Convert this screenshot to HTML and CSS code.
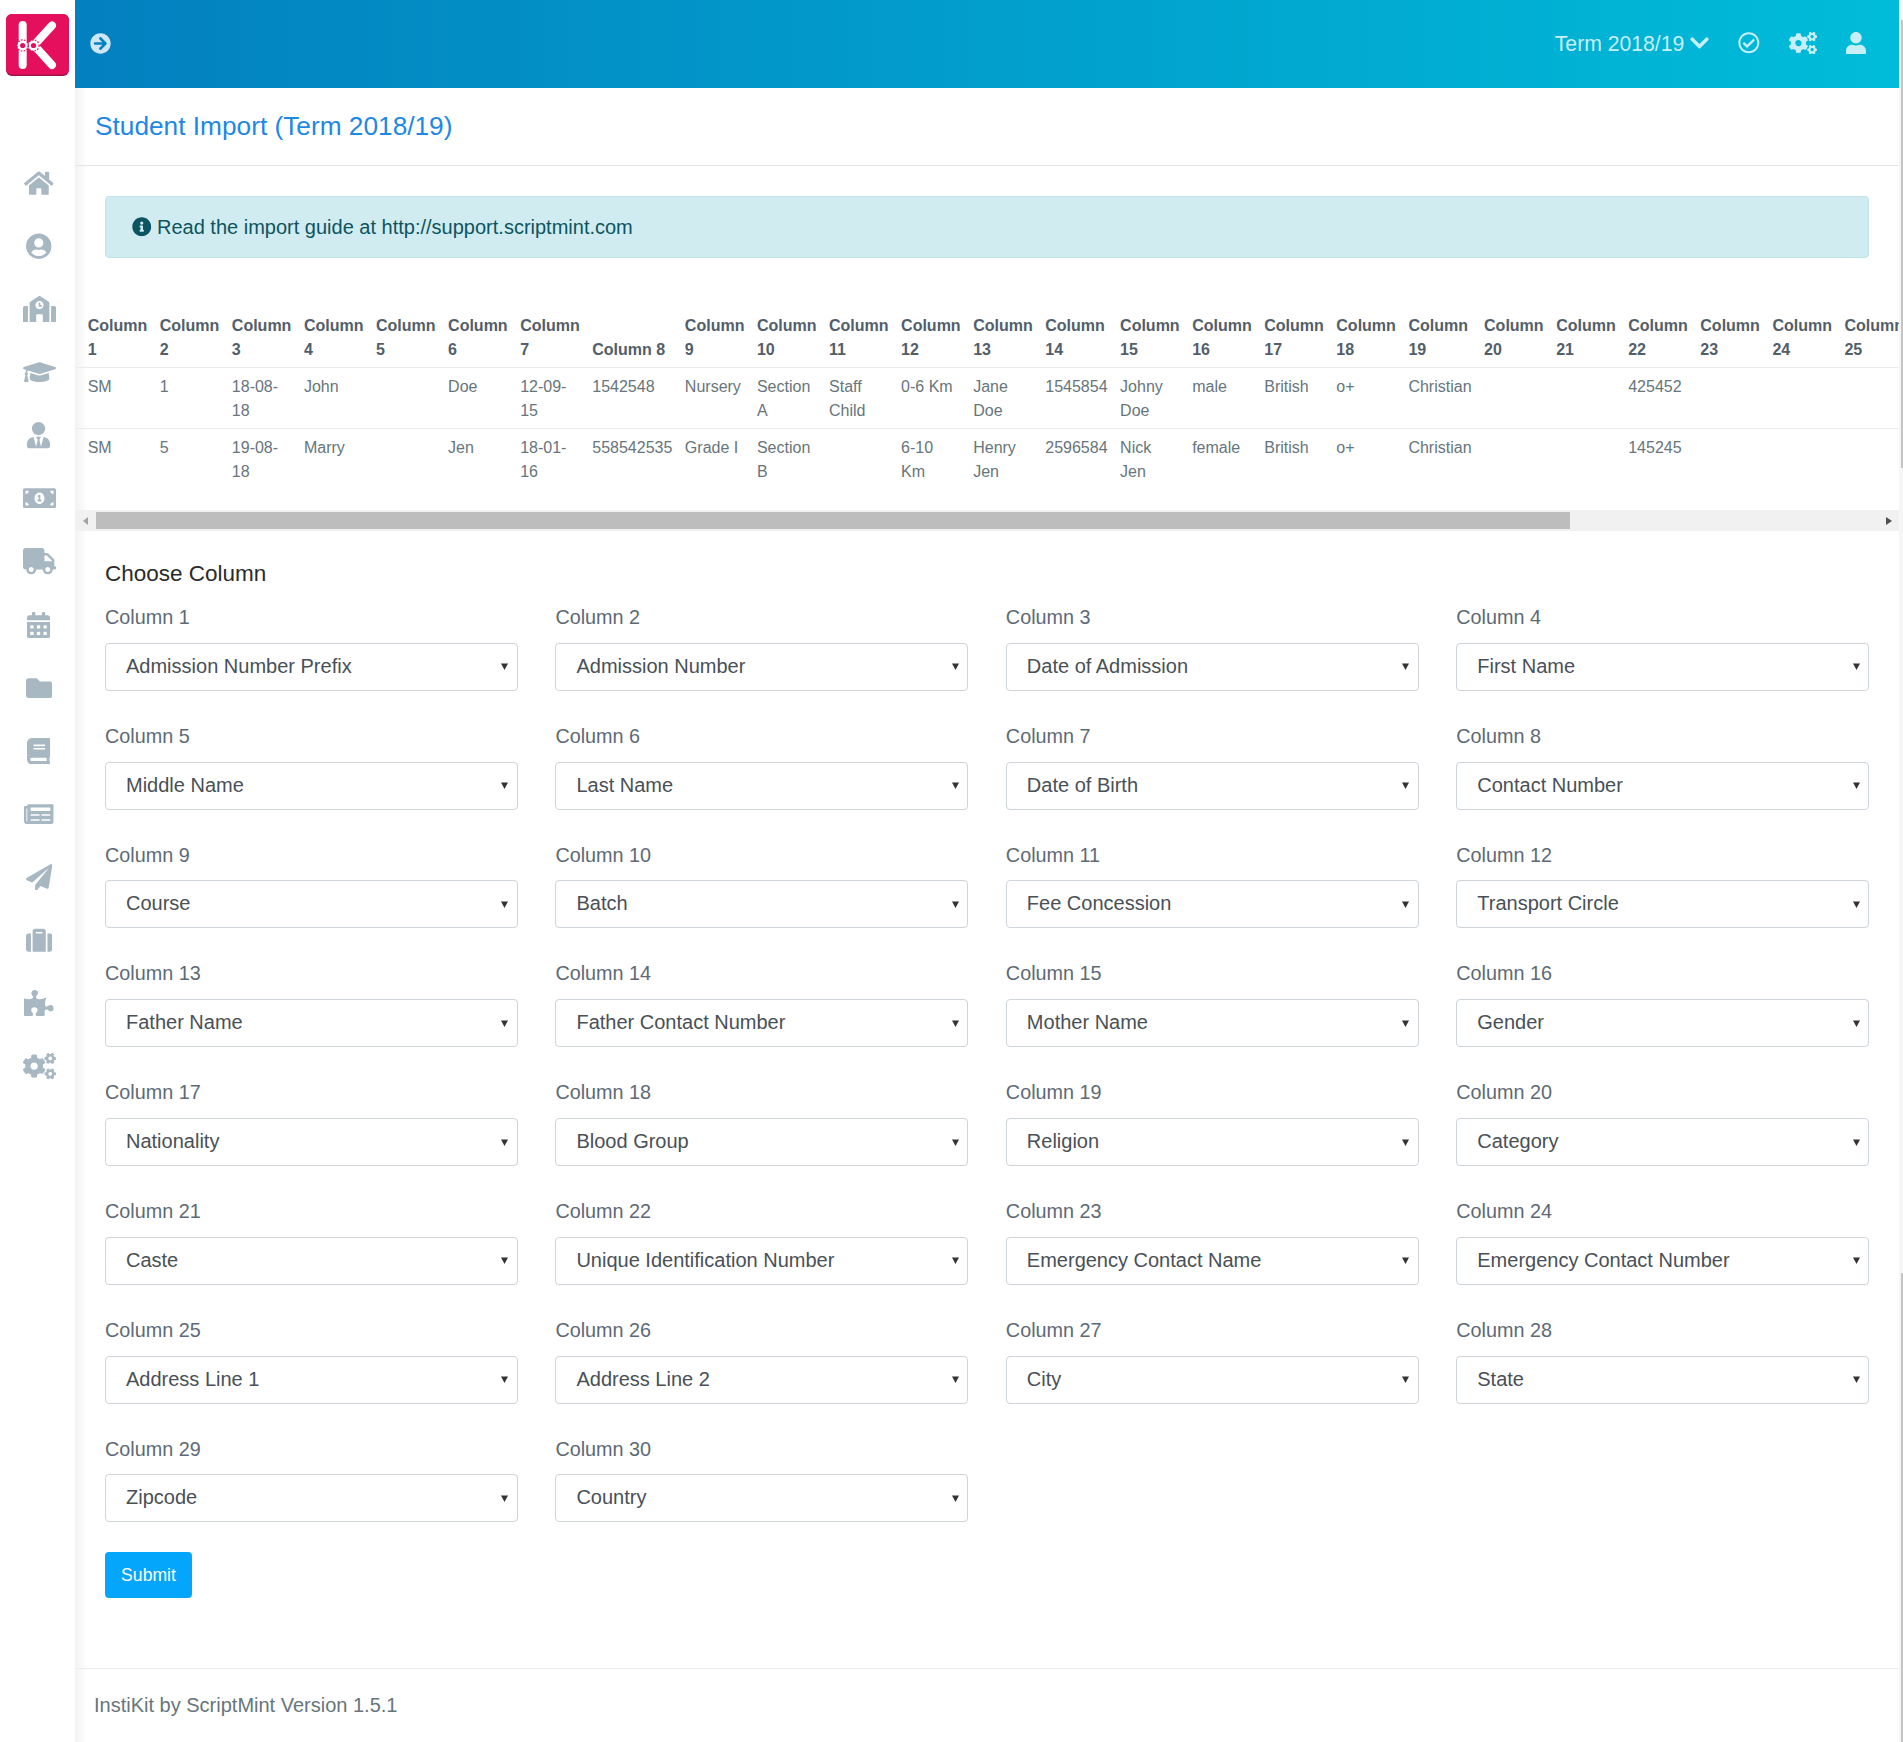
FILE: index.html
```html
<!DOCTYPE html>
<html lang="en">
<head>
<meta charset="utf-8">
<title>Student Import</title>
<link rel="stylesheet" href="styles.css">
</head>
<body>
<svg class="defs" aria-hidden="true">
<symbol id="i-home" viewBox="0 0 576 512"><path d="M280.37 148.26L96 300.11V464a16 16 0 0 0 16 16l112.06-.29a16 16 0 0 0 15.92-16V368a16 16 0 0 1 16-16h64a16 16 0 0 1 16 16v95.64a16 16 0 0 0 16 16.05L464 480a16 16 0 0 0 16-16V300L295.67 148.26a12.19 12.19 0 0 0-15.3 0zM571.6 251.47L488 182.56V44.05a12 12 0 0 0-12-12h-56a12 12 0 0 0-12 12v72.61L318.47 43a48 48 0 0 0-61 0L4.34 251.47a12 12 0 0 0-1.6 16.9l25.5 31A12 12 0 0 0 45.15 301l235.22-193.74a12.19 12.19 0 0 1 15.3 0L530.9 301a12 12 0 0 0 16.9-1.6l25.5-31a12 12 0 0 0-1.7-16.93z"/></symbol>
<symbol id="i-user-circle" viewBox="0 0 496 512"><path d="M248 8C111 8 0 119 0 256s111 248 248 248 248-111 248-248S385 8 248 8zm0 96c48.6 0 88 39.4 88 88s-39.4 88-88 88-88-39.4-88-88 39.4-88 88-88zm0 344c-58.7 0-111.3-26.6-146.5-68.2 18.8-35.4 55.6-59.8 98.5-59.8 2.4 0 4.8.4 7.1 1.1 13 4.2 26.6 6.9 40.9 6.9 14.3 0 28-2.7 40.9-6.9 2.3-.7 4.7-1.1 7.1-1.1 42.9 0 79.7 24.4 98.5 59.8C359.3 421.4 306.7 448 248 448z"/></symbol>
<symbol id="i-school" viewBox="0 0 640 512"><path d="M0 224v272c0 8.84 7.16 16 16 16h80V192H32c-17.67 0-32 14.33-32 32zm360-48h-24v-40c0-4.42-3.58-8-8-8h-16c-4.42 0-8 3.58-8 8v64c0 4.42 3.58 8 8 8h48c4.42 0 8-3.58 8-8v-16c0-4.42-3.58-8-8-8zm137.75-63.96l-160-106.67a32.02 32.02 0 0 0-35.5 0l-160 106.67A32.002 32.002 0 0 0 128 138.66V512h128V368c0-8.84 7.16-16 16-16h96c8.84 0 16 7.16 16 16v144h128V138.67c0-10.7-5.35-20.69-14.25-26.63zM320 256c-44.18 0-80-35.82-80-80s35.82-80 80-80 80 35.82 80 80-35.82 80-80 80zm288-64h-64v320h80c8.84 0 16-7.16 16-16V224c0-17.67-14.33-32-32-32z"/></symbol>
<symbol id="i-cap" viewBox="0 0 640 512"><path d="M622.34 153.2L343.4 67.5c-15.2-4.67-31.6-4.67-46.79 0L17.66 153.2c-23.54 7.23-23.54 38.36 0 45.59l48.63 14.94c-10.67 13.19-17.23 29.28-17.88 46.9C38.78 266.15 32 276.11 32 288c0 10.78 5.68 19.85 13.86 25.65L20.33 428.53C18.11 438.52 25.71 448 35.94 448h56.11c10.24 0 17.84-9.48 15.62-19.47L82.14 313.65C90.32 307.85 96 298.78 96 288c0-11.57-6.47-21.25-15.66-26.87.76-15.02 8.44-28.3 20.69-36.72L296.6 284.5c9.06 2.78 26.44 6.25 46.79 0l278.95-85.7c23.55-7.24 23.55-38.36 0-45.6zM352.79 315.09c-28.53 8.76-52.84 3.92-65.59 0l-145.02-44.55L128 384c0 35.35 85.96 64 192 64s192-28.65 192-64l-14.18-113.47-145.03 44.56z"/></symbol>
<symbol id="i-tie" viewBox="0 0 448 512"><path d="M224 256c70.7 0 128-57.3 128-128S294.7 0 224 0 96 57.3 96 128s57.3 128 128 128zm95.8 32.6L272 480l-32-136 32-56h-96l32 56-32 136-47.8-191.4C56.9 292 0 350.3 0 422.4V464c0 26.5 21.5 48 48 48h352c26.5 0 48-21.5 48-48v-41.6c0-72.1-56.9-130.4-128.2-133.8z"/></symbol>
<symbol id="i-money" viewBox="0 0 640 512"><path d="M352 288h-16v-88c0-4.42-3.58-8-8-8h-13.58c-4.74 0-9.37 1.4-13.31 4.03l-15.33 10.22a7.994 7.994 0 0 0-2.22 11.09l8.88 13.31a7.994 7.994 0 0 0 11.09 2.22l.47-.31V288h-16c-4.42 0-8 3.58-8 8v16c0 4.42 3.58 8 8 8h64c4.42 0 8-3.58 8-8v-16c0-4.42-3.58-8-8-8zM608 64H32C14.33 64 0 78.33 0 96v320c0 17.67 14.33 32 32 32h576c17.67 0 32-14.33 32-32V96c0-17.67-14.33-32-32-32zM48 400v-64c35.35 0 64 28.65 64 64H48zm0-224v-64h64c0 35.35-28.65 64-64 64zm272 192c-53 0-96-50.15-96-112 0-61.86 43-112 96-112s96 50.14 96 112c0 61.87-43.02 112-96 112zm272 32h-64c0-35.35 28.65-64 64-64v64zm0-224c-35.35 0-64-28.65-64-64h64v64z"/></symbol>
<symbol id="i-truck" viewBox="0 0 640 512"><path d="M624 352h-16V243.9c0-12.7-5.1-24.9-14.1-33.9L494 110.1c-9-9-21.2-14.1-33.9-14.1H416V48c0-26.5-21.5-48-48-48H48C21.5 0 0 21.5 0 48v320c0 26.5 21.5 48 48 48h16c0 53 43 96 96 96s96-43 96-96h128c0 53 43 96 96 96s96-43 96-96h48c8.8 0 16-7.2 16-16v-32c0-8.8-7.2-16-16-16zM160 464c-26.5 0-48-21.5-48-48s21.5-48 48-48 48 21.5 48 48-21.5 48-48 48zm320 0c-26.5 0-48-21.5-48-48s21.5-48 48-48 48 21.5 48 48-21.5 48-48 48zm80-208H416V144h44.1l99.9 99.9V256z"/></symbol>
<symbol id="i-calendar" viewBox="0 0 448 512"><path d="M0 464c0 26.5 21.5 48 48 48h352c26.5 0 48-21.5 48-48V192H0v272zm320-196c0-6.6 5.4-12 12-12h40c6.6 0 12 5.4 12 12v40c0 6.6-5.4 12-12 12h-40c-6.6 0-12-5.4-12-12v-40zm0 128c0-6.6 5.4-12 12-12h40c6.6 0 12 5.4 12 12v40c0 6.6-5.4 12-12 12h-40c-6.6 0-12-5.4-12-12v-40zM192 268c0-6.6 5.4-12 12-12h40c6.6 0 12 5.4 12 12v40c0 6.6-5.4 12-12 12h-40c-6.6 0-12-5.4-12-12v-40zm0 128c0-6.6 5.4-12 12-12h40c6.6 0 12 5.4 12 12v40c0 6.6-5.4 12-12 12h-40c-6.6 0-12-5.4-12-12v-40zM64 268c0-6.6 5.4-12 12-12h40c6.6 0 12 5.4 12 12v40c0 6.6-5.4 12-12 12H76c-6.6 0-12-5.4-12-12v-40zm0 128c0-6.6 5.4-12 12-12h40c6.6 0 12 5.4 12 12v40c0 6.6-5.4 12-12 12H76c-6.6 0-12-5.4-12-12v-40zM400 64h-48V16c0-8.8-7.2-16-16-16h-32c-8.8 0-16 7.2-16 16v48H160V16c0-8.8-7.2-16-16-16h-32c-8.8 0-16 7.2-16 16v48H48C21.5 64 0 85.5 0 112v48h448v-48c0-26.5-21.5-48-48-48z"/></symbol>
<symbol id="i-folder" viewBox="0 0 512 512"><path d="M464 128H272l-64-64H48C21.49 64 0 85.49 0 112v288c0 26.51 21.49 48 48 48h416c26.51 0 48-21.49 48-48V176c0-26.51-21.49-48-48-48z"/></symbol>
<symbol id="i-book" viewBox="0 0 448 512"><path d="M448 360V24c0-13.3-10.7-24-24-24H96C43 0 0 43 0 96v320c0 53 43 96 96 96h328c13.3 0 24-10.7 24-24v-16c0-7.5-3.5-14.3-8.9-18.7-4.2-15.4-4.2-59.3 0-74.7 5.4-4.3 8.9-11.1 8.9-18.6zM128 134c0-3.3 2.7-6 6-6h212c3.3 0 6 2.7 6 6v20c0 3.3-2.7 6-6 6H134c-3.3 0-6-2.7-6-6v-20zm0 64c0-3.3 2.7-6 6-6h212c3.3 0 6 2.7 6 6v20c0 3.3-2.7 6-6 6H134c-3.3 0-6-2.7-6-6v-20zm253.4 250H96c-17.7 0-32-14.3-32-32 0-17.6 14.4-32 32-32h285.4c-1.9 17.1-1.9 46.9 0 64z"/></symbol>
<symbol id="i-news" viewBox="0 0 576 512"><path d="M552 64H88c-13.255 0-24 10.745-24 24v8H24c-13.255 0-24 10.745-24 24v272c0 30.928 25.072 56 56 56h472c26.51 0 48-21.49 48-48V88c0-13.255-10.745-24-24-24zM56 400a8 8 0 0 1-8-8V144h16v248a8 8 0 0 1-8 8zm236-16H140c-6.627 0-12-5.373-12-12v-8c0-6.627 5.373-12 12-12h152c6.627 0 12 5.373 12 12v8c0 6.627-5.373 12-12 12zm208 0H348c-6.627 0-12-5.373-12-12v-8c0-6.627 5.373-12 12-12h152c6.627 0 12 5.373 12 12v8c0 6.627-5.373 12-12 12zm-208-96H140c-6.627 0-12-5.373-12-12v-8c0-6.627 5.373-12 12-12h152c6.627 0 12 5.373 12 12v8c0 6.627-5.373 12-12 12zm208 0H348c-6.627 0-12-5.373-12-12v-8c0-6.627 5.373-12 12-12h152c6.627 0 12 5.373 12 12v8c0 6.627-5.373 12-12 12zm0-96H140c-6.627 0-12-5.373-12-12v-40c0-6.627 5.373-12 12-12h360c6.627 0 12 5.373 12 12v40c0 6.627-5.373 12-12 12z"/></symbol>
<symbol id="i-plane" viewBox="0 0 512 512"><path d="M476 3.2L12.5 270.6c-18.1 10.4-15.8 35.6 2.2 43.2L121 358.4l287.3-253.2c5.5-4.9 13.3 2.6 8.6 8.3L176 407v80.5c0 23.6 28.5 32.9 42.5 15.8L282 426l124.6 52.2c14.2 6 30.4-2.9 33-18.2l72-432C515 7.8 493.3-6.8 476 3.2z"/></symbol>
<symbol id="i-suitcase" viewBox="0 0 512 512"><path d="M128 480h256V80c0-26.5-21.5-48-48-48H176c-26.5 0-48 21.5-48 48v400zm64-384h128v32H192V96zm320 80v256c0 26.5-21.5 48-48 48h-48V128h48c26.5 0 48 21.5 48 48zM96 480H48c-26.5 0-48-21.5-48-48V176c0-26.5 21.5-48 48-48h48v352z"/></symbol>
<symbol id="i-puzzle" viewBox="0 0 576 512"><path d="M519.442 288.651c-41.519 0-59.5 31.593-82.058 31.593C377.409 320.244 432 144 432 144s-196.288 80-196.288-3.297c0-35.827 36.288-46.25 36.288-85.985C272 19.216 243.885 0 210.539 0c-34.654 0-66.366 18.891-66.366 56.346 0 41.364 31.711 59.277 31.711 81.75C175.885 207.719 0 166.758 0 166.758v333.237s178.635 41.047 178.635-28.662c0-22.473-40-40.107-40-81.471 0-37.456 29.25-56.346 63.577-56.346 33.673 0 61.788 19.216 61.788 54.717 0 39.735-36.288 50.158-36.288 85.985 0 60.803 129.675 25.73 181.23 25.73 0 0-34.725-120.101 25.827-120.101 35.962 0 46.423 36.152 86.308 36.152C556.712 416 576 387.99 576 354.443c0-34.199-18.962-65.792-56.558-65.792z"/></symbol>
<symbol id="i-cogs" viewBox="0 0 640 512"><path d="M512.1 191l-8.2 14.3c-3 5.3-9.4 7.5-15.1 5.4-11.8-4.4-22.6-10.7-32.1-18.6-4.6-3.8-5.8-10.5-2.8-15.7l8.2-14.3c-6.9-8-12.3-17.3-15.9-27.4h-16.5c-6 0-11.2-4.3-12.2-10.3-2-12-2.1-24.6 0-37.1 1-6 6.2-10.4 12.2-10.4h16.5c3.6-10.1 9-19.4 15.9-27.4l-8.2-14.3c-3-5.2-1.9-11.9 2.8-15.7 9.5-7.9 20.4-14.2 32.1-18.6 5.7-2.1 12.1.1 15.1 5.4l8.2 14.3c10.5-1.9 21.2-1.9 31.7 0L552 6.3c3-5.3 9.4-7.5 15.1-5.4 11.8 4.4 22.6 10.7 32.1 18.6 4.6 3.8 5.8 10.5 2.8 15.7l-8.2 14.3c6.9 8 12.3 17.3 15.9 27.4h16.5c6 0 11.2 4.3 12.2 10.3 2 12 2.1 24.6 0 37.1-1 6-6.2 10.4-12.2 10.4h-16.5c-3.6 10.1-9 19.4-15.9 27.4l8.2 14.3c3 5.2 1.9 11.9-2.8 15.7-9.5 7.9-20.4 14.2-32.1 18.6-5.7 2.1-12.1-.1-15.1-5.4l-8.2-14.3c-10.4 1.9-21.2 1.9-31.7 0zm-10.5-58.8c38.5 29.6 82.4-14.3 52.8-52.8-38.5-29.7-82.4 14.3-52.8 52.8zM386.3 286.1l33.7 16.8c10.1 5.8 14.5 18.1 10.5 29.1-8.9 24.2-26.4 46.4-42.6 65.8-7.4 8.9-20.2 11.1-30.3 5.3l-29.1-16.8c-16 13.7-34.6 24.6-54.9 31.7v33.6c0 11.6-8.3 21.6-19.7 23.6-24.6 4.2-50.4 4.4-75.9 0-11.5-2-20-11.9-20-23.6V418c-20.3-7.2-38.9-18-54.9-31.7L74 403c-10 5.8-22.9 3.6-30.3-5.3-16.2-19.4-33.3-41.6-42.2-65.7-4-10.9.4-23.2 10.5-29.1l33.3-16.8c-3.9-20.9-3.9-42.4 0-63.4L12 205.8c-10.1-5.8-14.6-18.1-10.5-29 8.9-24.2 26-46.4 42.2-65.8 7.4-8.9 20.2-11.1 30.3-5.3l29.1 16.8c16-13.7 34.6-24.6 54.9-31.7V57.1c0-11.5 8.2-21.5 19.6-23.5 24.6-4.2 50.5-4.4 76-.1 11.5 2 20 11.9 20 23.6v33.6c20.3 7.2 38.9 18 54.9 31.7l29.1-16.8c10-5.8 22.9-3.6 30.3 5.3 16.2 19.4 33.2 41.6 42.1 65.8 4 10.9.1 23.2-10 29.1l-33.7 16.8c3.9 21 3.9 42.5 0 63.5zm-117.6 21.1c59.2-77-28.7-164.9-105.7-105.7-59.2 77 28.7 164.9 105.7 105.7zm243.4 182.7l-8.2 14.3c-3 5.3-9.4 7.5-15.1 5.4-11.8-4.4-22.6-10.7-32.1-18.6-4.6-3.8-5.8-10.5-2.8-15.7l8.2-14.3c-6.9-8-12.3-17.3-15.9-27.4h-16.5c-6 0-11.2-4.3-12.2-10.3-2-12-2.1-24.6 0-37.1 1-6 6.2-10.4 12.2-10.4h16.5c3.6-10.1 9-19.4 15.9-27.4l-8.2-14.3c-3-5.2-1.9-11.9 2.8-15.7 9.5-7.9 20.4-14.2 32.1-18.6 5.7-2.1 12.1.1 15.1 5.4l8.2 14.3c10.5-1.9 21.2-1.9 31.7 0l8.2-14.3c3-5.3 9.4-7.5 15.1-5.4 11.8 4.4 22.6 10.7 32.1 18.6 4.6 3.8 5.8 10.5 2.8 15.7l-8.2 14.3c6.9 8 12.3 17.3 15.9 27.4h16.5c6 0 11.2 4.3 12.2 10.3 2 12 2.1 24.6 0 37.1-1 6-6.2 10.4-12.2 10.4h-16.5c-3.6 10.1-9 19.4-15.9 27.4l8.2 14.3c3 5.2 1.9 11.9-2.8 15.7-9.5 7.9-20.4 14.2-32.1 18.6-5.7 2.1-12.1-.1-15.1-5.4l-8.2-14.3c-10.4 1.9-21.2 1.9-31.7 0zM501.6 431c38.5 29.6 82.4-14.3 52.8-52.8-38.5-29.6-82.4 14.3-52.8 52.8z"/></symbol>
<symbol id="i-user" viewBox="0 0 448 512"><path d="M224 256c70.7 0 128-57.3 128-128S294.7 0 224 0 96 57.3 96 128s57.3 128 128 128zm89.6 32h-16.7c-22.2 10.2-46.9 16-72.9 16s-50.6-5.8-72.9-16h-16.7C60.2 288 0 348.2 0 422.4V464c0 26.5 21.5 48 48 48h352c26.5 0 48-21.5 48-48v-41.6c0-74.2-60.2-134.4-134.4-134.4z"/></symbol>
<symbol id="i-arrow" viewBox="0 0 512 512"><path d="M256 8c137 0 248 111 248 248S393 504 256 504 8 393 8 256 119 8 256 8zm-28.9 143.6l75.5 72.4H120c-13.3 0-24 10.7-24 24v16c0 13.3 10.7 24 24 24h182.6l-75.5 72.4c-9.7 9.3-9.9 24.8-.4 34.3l11 10.9c9.4 9.4 24.6 9.4 33.9 0L404.3 273c9.4-9.4 9.4-24.6 0-33.9L271.6 106.3c-9.4-9.4-24.6-9.4-33.9 0l-11 10.9c-9.3 9.6-9.1 25.1.4 34.4z"/></symbol>
<symbol id="i-check" viewBox="0 0 512 512"><path d="M256 8C119.033 8 8 119.033 8 256s111.033 248 248 248 248-111.033 248-248S392.967 8 256 8zm0 48c110.532 0 200 89.451 200 200 0 110.532-89.451 200-200 200-110.532 0-200-89.451-200-200 0-110.532 89.451-200 200-200m140.204 130.267l-22.536-22.718c-4.667-4.705-12.265-4.736-16.97-.068L215.346 303.697l-59.792-60.277c-4.667-4.705-12.265-4.736-16.97-.069l-22.719 22.536c-4.705 4.667-4.736 12.265-.068 16.971l90.781 91.516c4.667 4.705 12.265 4.736 16.97.068l172.589-171.204c4.704-4.668 4.734-12.266.067-16.971z"/></symbol>
<symbol id="i-chevron" viewBox="0 0 448 512"><path d="M207.029 381.476L12.686 187.132c-9.373-9.373-9.373-24.569 0-33.941l22.667-22.667c9.357-9.357 24.522-9.375 33.901-.04L224 284.505l154.745-154.021c9.379-9.335 24.544-9.317 33.901.04l22.667 22.667c9.373 9.373 9.373 24.569 0 33.941L240.971 381.476c-9.373 9.372-24.569 9.372-33.942 0z"/></symbol>
<symbol id="i-info" viewBox="0 0 512 512"><path d="M256 8C119.043 8 8 119.083 8 256c0 136.997 111.043 248 248 248s248-111.003 248-248C504 119.083 392.957 8 256 8zm0 110c23.196 0 42 18.804 42 42s-18.804 42-42 42-42-18.804-42-42 18.804-42 42-42zm56 254c0 6.627-5.373 12-12 12h-88c-6.627 0-12-5.373-12-12v-24c0-6.627 5.373-12 12-12h12v-64h-12c-6.627 0-12-5.373-12-12v-24c0-6.627 5.373-12 12-12h64c6.627 0 12 5.373 12 12v100h12c6.627 0 12 5.373 12 12v24z"/></symbol>
</svg>

<div class="shell">
  <aside class="sidebar">
    <a class="logo" href="#" aria-label="InstiKit">
      <svg class="logo-mark" viewBox="0 0 63 62">
        <rect width="63" height="62" rx="6" fill="#a80f4e"/>
        <rect width="63" height="60.5" rx="6" fill="#e4105d"/>
        <g stroke="#fff" stroke-width="8" stroke-linecap="round" fill="none">
          <path d="M16.7 11v40"/>
          <path d="M30 29L46 11.5"/>
          <path d="M31 34.5L46 51"/>
        </g>
        <g fill="#fff"><circle cx="16.7" cy="31.5" r="5.6"/><circle cx="27.5" cy="31.5" r="5.6"/></g>
        <g fill="none" stroke="#e4105d" stroke-width="1.2" stroke-dasharray="1.6 1.4"><circle cx="16.7" cy="31.5" r="5.6"/><circle cx="27.5" cy="31.5" r="5.6"/></g>
        <g fill="#e4105d"><circle cx="16.7" cy="31.5" r="2.6"/><circle cx="27.5" cy="31.5" r="2.6"/></g>
      </svg>
    </a>
    <nav class="side-nav">
      <a class="side-link" href="#"><svg class="side-icon w-home"><use href="#i-home"/></svg></a>
      <a class="side-link" href="#"><svg class="side-icon w-circle"><use href="#i-user-circle"/></svg></a>
      <a class="side-link" href="#"><svg class="side-icon w-wide"><use href="#i-school"/></svg></a>
      <a class="side-link" href="#"><svg class="side-icon w-wide"><use href="#i-cap"/></svg></a>
      <a class="side-link" href="#"><svg class="side-icon w-narrow"><use href="#i-tie"/></svg></a>
      <a class="side-link" href="#"><svg class="side-icon w-wide"><use href="#i-money"/></svg></a>
      <a class="side-link" href="#"><svg class="side-icon w-wide"><use href="#i-truck"/></svg></a>
      <a class="side-link" href="#"><svg class="side-icon w-narrow"><use href="#i-calendar"/></svg></a>
      <a class="side-link" href="#"><svg class="side-icon w-square"><use href="#i-folder"/></svg></a>
      <a class="side-link" href="#"><svg class="side-icon w-narrow"><use href="#i-book"/></svg></a>
      <a class="side-link" href="#"><svg class="side-icon w-home"><use href="#i-news"/></svg></a>
      <a class="side-link" href="#"><svg class="side-icon w-square"><use href="#i-plane"/></svg></a>
      <a class="side-link" href="#"><svg class="side-icon w-square"><use href="#i-suitcase"/></svg></a>
      <a class="side-link" href="#"><svg class="side-icon w-home"><use href="#i-puzzle"/></svg></a>
      <a class="side-link" href="#"><svg class="side-icon w-wide"><use href="#i-cogs"/></svg></a>
    </nav>
  </aside>

  <main class="main">
    <header class="topbar">
      <a class="toggle" href="#" aria-label="Toggle"><svg class="toggle-icon"><use href="#i-arrow"/></svg></a>
      <div class="top-actions">
        <a class="term" href="#"><span class="term-label">Term 2018/19</span><svg class="term-chevron"><use href="#i-chevron"/></svg></a>
        <a class="top-icon" href="#"><svg class="ic-check"><use href="#i-check"/></svg></a>
        <a class="top-icon" href="#"><svg class="ic-cogs"><use href="#i-cogs"/></svg></a>
        <a class="top-icon" href="#"><svg class="ic-user"><use href="#i-user"/></svg></a>
      </div>
    </header>

    <section class="page-title"><h1 class="title">Student Import (Term 2018/19)</h1></section>

    <section class="content">
      <div class="alert"><svg class="alert-icon"><use href="#i-info"/></svg><span>Read the import guide at http://support.scriptmint.com</span></div>

      <div class="table-wrap">
        <table class="preview">
          <thead>
            <tr><th>Column 1</th><th>Column 2</th><th>Column 3</th><th>Column 4</th><th>Column 5</th><th>Column 6</th><th>Column 7</th><th>Column 8</th><th>Column 9</th><th>Column 10</th><th>Column 11</th><th>Column 12</th><th>Column 13</th><th>Column 14</th><th>Column 15</th><th>Column 16</th><th>Column 17</th><th>Column 18</th><th>Column 19</th><th>Column 20</th><th>Column 21</th><th>Column 22</th><th>Column 23</th><th>Column 24</th><th>Column 25</th></tr>
          </thead>
          <tbody>
            <tr><td>SM</td><td>1</td><td>18-08-18</td><td>John</td><td></td><td>Doe</td><td>12-09-15</td><td>1542548</td><td>Nursery</td><td>Section A</td><td>Staff Child</td><td>0-6 Km</td><td>Jane Doe</td><td>1545854</td><td>Johny Doe</td><td>male</td><td>British</td><td>o+</td><td>Christian</td><td></td><td></td><td>425452</td><td></td><td></td><td></td></tr>
            <tr><td>SM</td><td>5</td><td>19-08-18</td><td>Marry</td><td></td><td>Jen</td><td>18-01-16</td><td>558542535</td><td>Grade I</td><td>Section B</td><td></td><td>6-10 Km</td><td>Henry Jen</td><td>2596584</td><td>Nick Jen</td><td>female</td><td>British</td><td>o+</td><td>Christian</td><td></td><td></td><td>145245</td><td></td><td></td><td></td></tr>
          </tbody>
        </table>
      </div>
      <div class="hbar">
        <span class="hbar-btn"><span class="tri-left"></span></span>
        <span class="hbar-thumb"></span>
        <span class="hbar-rest"></span>
        <span class="hbar-btn"><span class="tri-right"></span></span>
      </div>

      <form class="choose">
        <h4 class="choose-title">Choose Column</h4>
        <div class="field-grid">
          <div class="field"><label class="field-label">Column 1</label><select class="field-select"><option>Admission Number Prefix</option></select></div>
          <div class="field"><label class="field-label">Column 2</label><select class="field-select"><option>Admission Number</option></select></div>
          <div class="field"><label class="field-label">Column 3</label><select class="field-select"><option>Date of Admission</option></select></div>
          <div class="field"><label class="field-label">Column 4</label><select class="field-select"><option>First Name</option></select></div>
          <div class="field"><label class="field-label">Column 5</label><select class="field-select"><option>Middle Name</option></select></div>
          <div class="field"><label class="field-label">Column 6</label><select class="field-select"><option>Last Name</option></select></div>
          <div class="field"><label class="field-label">Column 7</label><select class="field-select"><option>Date of Birth</option></select></div>
          <div class="field"><label class="field-label">Column 8</label><select class="field-select"><option>Contact Number</option></select></div>
          <div class="field"><label class="field-label">Column 9</label><select class="field-select"><option>Course</option></select></div>
          <div class="field"><label class="field-label">Column 10</label><select class="field-select"><option>Batch</option></select></div>
          <div class="field"><label class="field-label">Column 11</label><select class="field-select"><option>Fee Concession</option></select></div>
          <div class="field"><label class="field-label">Column 12</label><select class="field-select"><option>Transport Circle</option></select></div>
          <div class="field"><label class="field-label">Column 13</label><select class="field-select"><option>Father Name</option></select></div>
          <div class="field"><label class="field-label">Column 14</label><select class="field-select"><option>Father Contact Number</option></select></div>
          <div class="field"><label class="field-label">Column 15</label><select class="field-select"><option>Mother Name</option></select></div>
          <div class="field"><label class="field-label">Column 16</label><select class="field-select"><option>Gender</option></select></div>
          <div class="field"><label class="field-label">Column 17</label><select class="field-select"><option>Nationality</option></select></div>
          <div class="field"><label class="field-label">Column 18</label><select class="field-select"><option>Blood Group</option></select></div>
          <div class="field"><label class="field-label">Column 19</label><select class="field-select"><option>Religion</option></select></div>
          <div class="field"><label class="field-label">Column 20</label><select class="field-select"><option>Category</option></select></div>
          <div class="field"><label class="field-label">Column 21</label><select class="field-select"><option>Caste</option></select></div>
          <div class="field"><label class="field-label">Column 22</label><select class="field-select"><option>Unique Identification Number</option></select></div>
          <div class="field"><label class="field-label">Column 23</label><select class="field-select"><option>Emergency Contact Name</option></select></div>
          <div class="field"><label class="field-label">Column 24</label><select class="field-select"><option>Emergency Contact Number</option></select></div>
          <div class="field"><label class="field-label">Column 25</label><select class="field-select"><option>Address Line 1</option></select></div>
          <div class="field"><label class="field-label">Column 26</label><select class="field-select"><option>Address Line 2</option></select></div>
          <div class="field"><label class="field-label">Column 27</label><select class="field-select"><option>City</option></select></div>
          <div class="field"><label class="field-label">Column 28</label><select class="field-select"><option>State</option></select></div>
          <div class="field"><label class="field-label">Column 29</label><select class="field-select"><option>Zipcode</option></select></div>
          <div class="field"><label class="field-label">Column 30</label><select class="field-select"><option>Country</option></select></div>
        </div>
        <button class="submit" type="button">Submit</button>
      </form>
    </section>

    <footer class="footer">InstiKit by ScriptMint Version 1.5.1</footer>
  </main>

  <div class="page-rail">
    <span class="rail-gap-a"></span>
    <span class="rail-thumb-a"></span>
    <span class="rail-gap-b"></span>
    <span class="rail-thumb-b"></span>
  </div>
</div>
</body>
</html>
```

FILE: styles.css
```css
* { box-sizing: border-box; }
html, body { margin: 0; padding: 0; height: 1742px; overflow: hidden; }
body {
  font-family: "Liberation Sans", Arial, sans-serif;
  color: #67757c;
  background: #fff;
  font-size: 16px;
  line-height: 1.5;
}
a { color: inherit; text-decoration: none; }
.defs { display: none; }

.shell { display: flex; width: 1903px; height: 1742px; overflow: hidden; }

/* sidebar */
.sidebar { width: 75px; flex: none; background: #fff; }
.logo { display: block; padding: 14px 0 0 6px; height: 151.5px; }
.logo-mark { display: block; width: 63px; height: 62px; }
.side-nav { display: flex; flex-direction: column; }
.side-link { display: flex; height: 63.1px; align-items: center; justify-content: center; padding-left: 3px; }
.side-icon { display: block; height: 26.4px; fill: #a8b8c3; }
.w-home { width: 29.7px; }
.w-circle { width: 25.6px; }
.w-wide { width: 33px; }
.w-narrow { width: 23.1px; }
.w-square { width: 26.4px; }

/* main column */
.main {
  flex: 1;
  min-width: 0;
  display: flex;
  flex-direction: column;
  background: linear-gradient(to right, #f2f2f2, #fff 12px);
}
.topbar {
  height: 88px;
  flex: none;
  display: flex;
  align-items: center;
  justify-content: space-between;
  padding: 0 33px 2px 15px;
  background: linear-gradient(to right, #0380bf, #00bcd9);
}
.toggle { display: flex; }
.toggle-icon { width: 21px; height: 21px; fill: #cfe6f6; }
.top-actions { display: flex; align-items: center; }
.term { display: flex; align-items: center; font-size: 21.2px; color: #c6eff7; gap: 6px; margin-right: 29px; }
.term-label { padding-top: 2px; }
.term-chevron { width: 19px; height: 21.7px; fill: #c6eff7; }
.top-icon { display: flex; }
.top-icon svg { fill: #c6eff7; display: block; }
.ic-check { width: 21.7px; height: 21.7px; margin-right: 29px; }
.ic-cogs { width: 28px; height: 22.4px; margin-right: 29px; }
.ic-user { width: 20px; height: 22.8px; }

.page-title { height: 78px; flex: none; border-bottom: 1px solid #e3e6e8; padding: 21px 0 0 20px; }
.title { margin: 0; font-size: 26.25px; font-weight: 400; line-height: 34px; color: #1e88e5; }

.content { flex: 1; min-height: 0; }
.alert {
  margin: 30px 30px 0;
  height: 62px;
  display: flex;
  align-items: center;
  padding-left: 26px;
  background: #d1ecf1;
  border: 1px solid #bee5eb;
  border-radius: 4px;
  color: #0c5460;
  font-size: 20px;
}
.alert-icon { width: 19.5px; height: 19.5px; fill: #0c5460; margin-right: 5.5px; flex: none; }

.table-wrap { overflow: hidden; margin-top: 49px; height: 203px; }
.preview { border-collapse: collapse; font-size: 16px; line-height: 24px; }
.preview th, .preview td { padding: 7px 6.27px 5px; text-align: left; }
.preview th { vertical-align: bottom; font-weight: 700; color: #525e6a; }
.preview td { vertical-align: top; border-top: 1px solid #e9ecef; }
.preview th:first-child, .preview td:first-child { padding-left: 12.7px; }

.hbar { display: flex; align-items: center; height: 21px; background: #f1f1f1; }
.hbar-btn { width: 21px; flex: none; display: flex; justify-content: center; align-items: center; }
.hbar-thumb { width: 1474px; height: 17px; background: #bdbdbd; flex: none; }
.hbar-rest { flex: 1; }
.tri-left { width: 0; height: 0; border: 4px solid transparent; border-left: 0; border-right: 5px solid #a3a3a3; }
.tri-right { width: 0; height: 0; border: 4.5px solid transparent; border-right: 0; border-left: 6px solid #505050; }

.choose { padding: 29px 30px 0; }
.choose-title { margin: 0 0 16px; font-size: 22.5px; line-height: 27px; font-weight: 400; color: #2b2b2b; }
.field-grid {
  display: grid;
  grid-template-columns: repeat(4, 1fr);
  column-gap: 37.7px;
  row-gap: 31.15px;
}
.field-label { display: block; font-size: 19.8px; line-height: 29px; margin-bottom: 10.7px; color: #5d6a76; }
.field-select {
  display: block;
  width: 100%;
  height: 48px;
  padding: 0 30px 2px 20px;
  font: 20px "Liberation Sans", Arial, sans-serif;
  color: #495057;
  appearance: none;
  background: #fff url("data:image/svg+xml,%3Csvg xmlns='http://www.w3.org/2000/svg' width='7' height='7'%3E%3Cpath d='M0 .5h7L3.5 7z' fill='%23333'/%3E%3C/svg%3E") no-repeat right 8.5px center;
  border: 1px solid #ced4da;
  border-radius: 4px;
}
.submit {
  display: block;
  margin-top: 29.5px;
  width: 87px;
  height: 46px;
  padding: 2px 0 0;
  border: 0;
  border-radius: 4px;
  background: #03a6fb;
  color: #fff;
  font: 17.6px "Liberation Sans", Arial, sans-serif;
}

.footer {
  flex: none;
  height: 74px;
  border-top: 1px solid #e9ecef;
  padding: 21.5px 0 0 19px;
  font-size: 20px;
  line-height: 29px;
  color: #67757c;
}

/* page scrollbar sliver at the window edge */
.page-rail { width: 4px; flex: none; display: flex; flex-direction: column; align-items: flex-end; background: #f6f6f6; }
.rail-gap-a { height: 20px; flex: none; }
.rail-thumb-a { width: 2px; height: 448px; background: #c4c4c4; flex: none; }
.rail-gap-b { height: 805px; flex: none; }
.rail-thumb-b { width: 2px; flex: 1; background: #c4c4c4; }
```
